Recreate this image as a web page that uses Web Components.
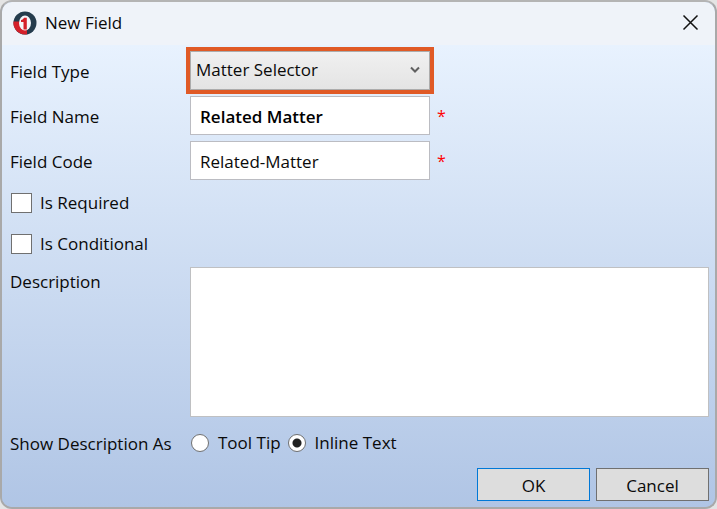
<!DOCTYPE html>
<html lang="en">
<head>
    <meta charset="UTF-8">
    <meta name="viewport" content="width=device-width, initial-scale=1.0">
    <title>New Field</title>
    <style>
        body {
            margin: 0;
            background: #e4e4e4;
            color: #0a0a0a;
            font: 17px/24px "Open Sans", "Noto Sans", sans-serif;
            --label-width: 180px;
            --field-width: 240px;
        }
    </style>
</head>
<body>
    <dialog-window caption="New Field">
        <select-field label="Field Type" value="Matter Selector"></select-field>
        <text-field label="Field Name" value="Related Matter" strong></text-field>
        <text-field label="Field Code" value="Related-Matter"></text-field>
        <check-field label="Is Required"></check-field>
        <check-field label="Is Conditional"></check-field>
        <memo-field label="Description"></memo-field>
        <radio-field label="Show Description As" options="Tool Tip,Inline Text" value="Inline Text"></radio-field>
        <push-button slot="actions" primary>OK</push-button>
        <push-button slot="actions">Cancel</push-button>
    </dialog-window>
    <script>
        // shared by all elements: parse the markup and attach it
        class BaseElement extends HTMLElement {
            render(html) {
                const template = document.createElement('template');
                template.innerHTML = `
                <style>
                    * { box-sizing: border-box; }
                    input, select, textarea, button { font: inherit; color: inherit; margin: 0; border-radius: 0; }
                </style>` + html;
                this.$shadow = this.attachShadow({mode: 'open'});
                this.$shadow.appendChild(template.content.cloneNode(true));
            }
            attr(name) {
                return this.getAttribute(name) || '';
            }
        }

        class DialogWindow extends BaseElement {
            constructor() {
                super();
                this.render(`
                <style>
                    :host {
                        display: flex;
                        flex-direction: column;
                        box-sizing: border-box;
                        min-height: 100vh;
                        border: 2px solid #a9a9a9;
                        border-top-color: #b4b4b4;
                        border-radius: 12px;
                        overflow: hidden;
                        background: #b0c5e5;
                    }
                    header {
                        display: flex;
                        align-items: center;
                        gap: 8px;
                        height: 43px;
                        padding: 0 9px 2px 11px;
                        background: #eff3f9;
                    }
                    h1 {
                        flex: 1;
                        margin: 0;
                        font-size: 17px;
                        font-weight: 400;
                    }
                    .close {
                        display: flex;
                        padding: 0;
                        border: 0;
                        background: none;
                    }
                    main {
                        flex: 1;
                        display: flex;
                        flex-direction: column;
                        padding: 0 6px 6px 8px;
                        background: linear-gradient(#e8f2fe, #b0c5e5);
                    }
                    footer {
                        display: flex;
                        justify-content: flex-end;
                        gap: 6px;
                    }
                    ::slotted(memo-field) { flex: 1; }
                </style>
                <header>
                    <svg width="24" height="24" viewBox="0 0 24 24" aria-hidden="true">
                        <circle cx="12" cy="12" r="11.5" fill="#253c4d"/>
                        <path d="M.5 10.5H14v12.8A11.5 11.5 0 0 1 .5 10.5z" fill="#d4202a"/>
                        <ellipse cx="12" cy="12" rx="6" ry="7.5" fill="#f4f6fa"/>
                        <path d="M8 9c1.500-.2 2.500-1 3-2.200h2.800V18.500h-3.300V11H8z" fill="#d4202a"/>
                    </svg>
                    <h1></h1>
                    <button class="close" aria-label="Close">
                        <svg width="31" height="31" viewBox="0 0 31 31">
                            <path d="M8.5 8.5l14 14M22.5 8.5l-14 14" stroke="#111" stroke-width="1.5" fill="none"/>
                        </svg>
                    </button>
                </header>
                <main>
                    <slot></slot>
                    <footer><slot name="actions"></slot></footer>
                </main>
                `);
                this.$shadow.querySelector('h1').textContent = this.attr('caption');
            }
        }

        class SelectField extends BaseElement {
            constructor() {
                super();
                this.render(`
                <style>
                    :host {
                        display: grid;
                        grid-template-columns: var(--label-width) var(--field-width);
                        align-items: center;
                        margin-top: 6px;
                    }
                    label { padding-top: 2px; }
                    .box {
                        display: grid;
                        align-items: center;
                        outline: 4px solid #e05a26;
                    }
                    select, svg { grid-area: 1 / 1; }
                    select {
                        appearance: none;
                        width: 100%;
                        height: 39px;
                        padding: 0 5px 2px;
                        border: 1px solid #acacac;
                        background: linear-gradient(#f0f0f0, #e4e4e4);
                    }
                    svg {
                        justify-self: end;
                        margin: 0 10px 2px 0;
                        pointer-events: none;
                    }
                </style>
                <label for="field"></label>
                <div class="box">
                    <select id="field"><option></option></select>
                    <svg width="10" height="10" viewBox="0 0 10 10">
                        <path d="M1 2.5l4 4 4-4" stroke="#606060" stroke-width="2" fill="none"/>
                    </svg>
                </div>
                `);
                this.$shadow.querySelector('label').textContent = this.attr('label');
                this.$shadow.querySelector('option').textContent = this.attr('value');
            }
        }

        class TextField extends BaseElement {
            constructor() {
                super();
                this.render(`
                <style>
                    :host {
                        display: grid;
                        grid-template-columns: var(--label-width) var(--field-width) auto;
                        align-items: center;
                        margin-top: 6px;
                    }
                    label { padding-top: 2px; }
                    input {
                        width: 100%;
                        height: 39px;
                        padding: 2px 9px 0;
                        border: 1px solid #bbbcc2;
                        background: #fff;
                    }
                    :host([strong]) input { font-weight: 600; color: #000; }
                    span { padding-left: 7px; color: #f00; font-size: 16px; }
                </style>
                <label for="field"></label>
                <input id="field" type="text" required>
                <span>*</span>
                `);
                this.$shadow.querySelector('label').textContent = this.attr('label');
                this.$shadow.querySelector('input').value = this.attr('value');
            }
        }

        class CheckField extends BaseElement {
            constructor() {
                super();
                this.render(`
                <style>
                    :host {
                        display: flex;
                        align-items: center;
                        gap: 8px;
                        height: 37px;
                        margin-top: 4px;
                        padding-left: 1px;
                    }
                    input {
                        appearance: none;
                        width: 21px;
                        height: 20px;
                        border: 1px solid #707070;
                        background: #fff;
                    }
                    input:checked { box-shadow: inset 0 0 0 4px #fff; background: #212121; }
                </style>
                <input id="field" type="checkbox">
                <label for="field"></label>
                `);
                this.$shadow.querySelector('label').textContent = this.attr('label');
            }
        }

        class MemoField extends BaseElement {
            constructor() {
                super();
                this.render(`
                <style>
                    :host {
                        display: grid;
                        grid-template-columns: var(--label-width) 1fr;
                        margin-top: 5px;
                    }
                    label { padding-top: 3px; }
                    textarea {
                        width: 100%;
                        height: 100%;
                        min-height: 120px;
                        padding: 6px 9px;
                        border: 1px solid #bfc0c2;
                        background: #fff;
                        resize: none;
                    }
                </style>
                <label for="field"></label>
                <textarea id="field"></textarea>
                `);
                this.$shadow.querySelector('label').textContent = this.attr('label');
            }
        }

        class RadioField extends BaseElement {
            constructor() {
                super();
                this.render(`
                <style>
                    :host { display: block; }
                    div {
                        display: grid;
                        grid-template-columns: var(--label-width) auto auto 1fr;
                        align-items: center;
                        height: 51px;
                    }
                    span { padding-top: 2px; }
                    label {
                        display: flex;
                        align-items: center;
                        gap: 9px;
                        margin: 0 6px 0 1px;
                    }
                    input {
                        appearance: none;
                        width: 18px;
                        height: 18px;
                        border: 1px solid #707070;
                        border-radius: 50%;
                        background: #fff;
                    }
                    input:checked { background: radial-gradient(circle, #212121 4px, #fff 5px); }
                </style>
                <div role="radiogroup" aria-labelledby="caption"><span id="caption"></span></div>
                `);
                const group = this.$shadow.querySelector('div');
                this.$shadow.querySelector('span').textContent = this.attr('label');
                this.attr('options').split(',').forEach(text => {
                    const label = document.createElement('label');
                    const input = document.createElement('input');
                    input.type = 'radio';
                    input.name = 'choice';
                    input.checked = text === this.attr('value');
                    label.append(input, text);
                    group.appendChild(label);
                });
            }
        }

        class PushButton extends BaseElement {
            constructor() {
                super();
                this.render(`
                <style>
                    :host { display: block; }
                    button {
                        display: block;
                        width: 113px;
                        height: 33px;
                        padding: 2px 0 0;
                        border: 1px solid #707070;
                        background: #ddd;
                    }
                    :host([primary]) button { border-color: #0078d7; }
                </style>
                <button type="button"><slot></slot></button>
                `);
            }
        }

        window.customElements.define('dialog-window', DialogWindow);
        window.customElements.define('select-field', SelectField);
        window.customElements.define('text-field', TextField);
        window.customElements.define('check-field', CheckField);
        window.customElements.define('memo-field', MemoField);
        window.customElements.define('radio-field', RadioField);
        window.customElements.define('push-button', PushButton);
    </script>
</body>
</html>
